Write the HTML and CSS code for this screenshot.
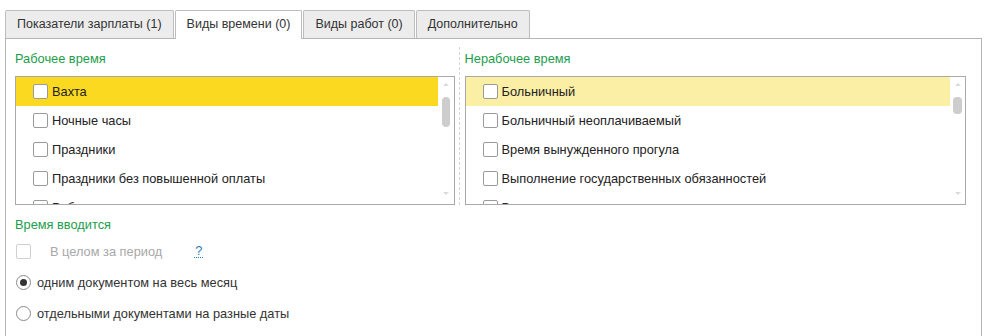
FILE: index.html
```html
<!DOCTYPE html>
<html lang="ru">
<head>
<meta charset="utf-8">
<link rel="stylesheet" href="styles.css">
</head>
<body>
<div class="tabs">
  <div class="tab">Показатели зарплаты (1)</div>
  <div class="tab active">Виды времени (0)</div>
  <div class="tab">Виды работ (0)</div>
  <div class="tab">Дополнительно</div>
</div>
<div class="panel">
  <div class="columns">
    <div class="col col-left">
      <div class="group-title">Рабочее время</div>
      <div class="listbox">
        <div class="rows">
          <div class="row current"><span class="cb"></span><span>Вахта</span></div>
          <div class="row"><span class="cb"></span><span>Ночные часы</span></div>
          <div class="row"><span class="cb"></span><span>Праздники</span></div>
          <div class="row"><span class="cb"></span><span>Праздники без повышенной оплаты</span></div>
          <div class="row"><span class="cb"></span><span>Работа в выходные и праздничные дни</span></div>
        </div>
        <div class="scroll"><span class="arrow up"></span><span class="thumb thumb-long"></span><span class="arrow down"></span></div>
      </div>
    </div>
    <div class="sep"></div>
    <div class="col col-right">
      <div class="group-title">Нерабочее время</div>
      <div class="listbox">
        <div class="rows">
          <div class="row pale"><span class="cb"></span><span>Больничный</span></div>
          <div class="row"><span class="cb"></span><span>Больничный неоплачиваемый</span></div>
          <div class="row"><span class="cb"></span><span>Время вынужденного прогула</span></div>
          <div class="row"><span class="cb"></span><span>Выполнение государственных обязанностей</span></div>
          <div class="row"><span class="cb"></span><span>Время простоя</span></div>
        </div>
        <div class="scroll"><span class="arrow up"></span><span class="thumb thumb-short"></span><span class="arrow down"></span></div>
      </div>
    </div>
  </div>
  <div class="group-title bottom-title">Время вводится</div>
  <div class="opt opt-check"><span class="cb disabled"></span><span class="dis-text">В целом за период</span><span class="help">?</span></div>
  <div class="opt"><span class="radio checked"></span><span>одним документом на весь месяц</span></div>
  <div class="opt"><span class="radio"></span><span>отдельными документами на разные даты</span></div>
</div>
</body>
</html>
```
FILE: styles.css
```css
html, body {
  margin: 0;
  padding: 0;
  background: #fff;
}
body {
  font-family: "Liberation Sans", Arial, sans-serif;
  font-size: 12.8px;
  color: #333;
  overflow: hidden;
  height: 336px;
}
.tabs {
  display: flex;
  padding: 10px 0 0 5px;
  height: 28px;
  position: relative;
  z-index: 1;
}
.tab {
  box-sizing: border-box;
  height: 28px;
  padding: 0 11px;
  line-height: 27px;
  font-size: 12.5px;
  background: #ececec;
  border: 1px solid #bdbdbd;
  border-bottom: none;
  border-radius: 2px 2px 0 0;
  margin-right: 1px;
  white-space: nowrap;
}
.tab.active {
  background: #fff;
  height: 29px;
}
.panel {
  margin-left: 5px;
  width: 977px;
  box-sizing: border-box;
  border: 1px solid #b5b5b5;
  height: 320px;
  padding: 0 15px 0 9px;
}
.columns {
  display: flex;
}
.col-left {
  width: 440px;
}
.col-right {
  width: 502px;
}
.sep {
  width: 0;
  border-left: 1px dashed #d4d4d4;
  margin: 8px 5px 0 4px;
  height: 158px;
}
.group-title {
  color: #1c9e4a;
  height: 37px;
  line-height: 40px;
}
.listbox {
  box-sizing: border-box;
  height: 129px;
  border: 1px solid #a9a9a9;
  display: flex;
  overflow: hidden;
}
.rows {
  flex: 1;
}
.row {
  height: 29px;
  display: flex;
  align-items: center;
  padding-left: 17px;
  color: #222;
  white-space: nowrap;
}
.row.current {
  background: #fbd921;
}
.row.pale {
  background: #fbefa5;
}
.cb {
  box-sizing: border-box;
  width: 15px;
  height: 15px;
  border: 1px solid #9a9a9a;
  border-radius: 2px;
  background: #fff;
  margin-right: 4px;
  flex: none;
}
.scroll {
  width: 16px;
  position: relative;
}
.col-right .scroll {
  width: 15px;
}
.thumb {
  position: absolute;
  left: 4px;
  top: 20px;
  width: 8px;
  border-radius: 4px;
  background: #cdcdcd;
}
.thumb-long { height: 30px; }
.thumb-short { height: 17px; left: 3px; width: 9px; }
.arrow {
  position: absolute;
  left: 5px;
  width: 0;
  height: 0;
  border-left: 3px solid transparent;
  border-right: 3px solid transparent;
}
.arrow.up {
  top: 6px;
  border-bottom: 3px solid #dadada;
}
.arrow.down {
  bottom: 9px;
  border-top: 3px solid #dadada;
}
.bottom-title {
  height: 30px;
  line-height: 40px;
}
.opt {
  display: flex;
  align-items: center;
  height: 31px;
  padding-left: 1px;
  white-space: nowrap;
}
.opt-check {
  height: 32px;
}
.cb.disabled {
  border-color: #d0d0d0;
  margin-right: 19px;
}
.dis-text {
  color: #a8a8a8;
}
.help {
  color: #2b78b8;
  margin-left: 32px;
  border-bottom: 1px dotted #2b78b8;
  line-height: 13px;
  padding: 0 1px;
}
.radio {
  box-sizing: border-box;
  width: 15px;
  height: 15px;
  border: 1px solid #8a8a8a;
  border-radius: 50%;
  margin-right: 6px;
  position: relative;
  flex: none;
}
.radio.checked::after {
  content: "";
  position: absolute;
  left: 3px;
  top: 3px;
  width: 7px;
  height: 7px;
  border-radius: 50%;
  background: #333;
}
```
